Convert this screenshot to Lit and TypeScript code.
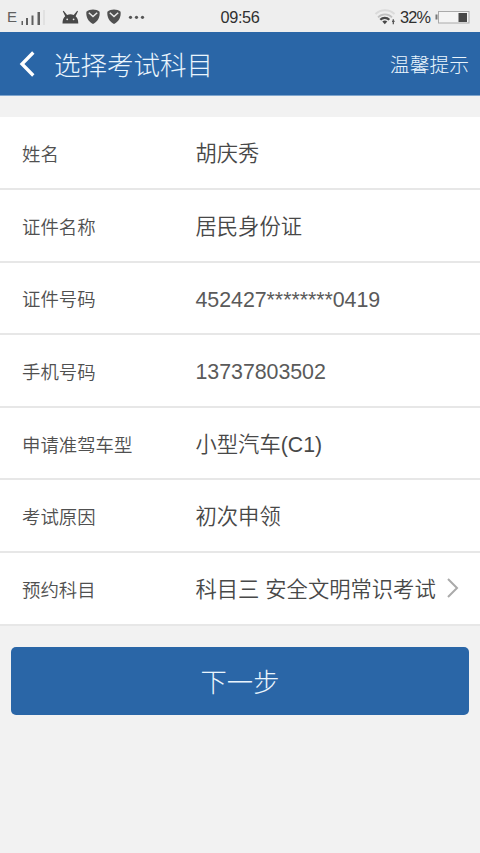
import { LitElement, html, css, svg } from "lit";
import { customElement, property } from "lit/decorators.js";
import { classMap } from "lit/directives/class-map.js";

const shield = (x: number) => svg`
  <g transform="translate(${x} 8.5)">
    <path d="M7 0C9.500 0 12 .8 13.600 2.200 14.200 7.500 11.800 12 7 14.500 2.200 12-.2 7.500.4 2.200 2 .8 4.500 0 7 0z" fill="#505050"/>
    <path d="M2.800 3.200 7 7l4.200-3.800" fill="none" stroke="#e8e8e8" stroke-width="1.500"/>
  </g>`;

@customElement("status-bar")
class StatusBar extends LitElement {
  static styles = css`
    :host {
      display: grid;
      grid-template-columns: 1fr auto 1fr;
      align-items: center;
      height: 32px;
      background: #eeeeee;
      color: #303030;
      font: 16.300px/32px "Liberation Sans", Arial, sans-serif;
    }
    svg { display: block; }
    .time { letter-spacing: -0.300px; }
    .left { display: flex; align-items: center; }
    .network { width: 20px; padding-left: 7px; box-sizing: border-box; font-size: 15px; line-height: 34px; color: #606060; }
    .right { display: flex; justify-content: flex-end; align-items: center; padding-right: 10px; }
    .percent { margin: 0 5px 0 4px; letter-spacing: -0.900px; }
  `;
  render() {
    return html`
      <div class="left">
        <span class="network">E</span>
        <svg width="130" height="32" viewBox="20 0 130 32">
          <g fill="#606060">
            <rect x="21.500" y="20" width="1.500" height="4" />
            <rect x="26" y="17" width="2" height="7" />
            <rect x="31.500" y="14.500" width="2" height="9.500" />
            <rect x="37.500" y="11" width="2.500" height="13" />
            <rect x="43.500" y="9" width="1" height="15" fill="#d4d4d4" />
          </g>
          <path d="M62.500 22.500c0-3.500 1-5.800 2.700-7.200L62.800 10.300l.8-.5 3.500 4.200a9 9 0 0 1 6.600 0l3.500-4.200.8.5-2.400 5c1.700 1.400 2.700 3.700 2.700 7.200z" fill="#484848" />
          <circle cx="67.200" cy="18.300" r=".9" fill="#e8e8e8" />
          <circle cx="73.600" cy="18.300" r=".9" fill="#e8e8e8" />
          ${shield(86)}${shield(107)}
          <g fill="#555"><circle cx="130.500" cy="16.300" r="1.600" /><circle cx="136.500" cy="16.300" r="1.600" /><circle cx="142.500" cy="16.300" r="1.600" /></g>
        </svg>
      </div>
      <span class="time">09:56</span>
      <div class="right">
        <svg width="22" height="32" viewBox="375 0 22 32" fill="none">
          <path d="M376.500 13a14 14 0 0 1 19 0" stroke="#dadada" stroke-width="2" />
          <path d="M379 16.300a10 10 0 0 1 14 0" stroke="#c0c0c0" stroke-width="1.800" />
          <path d="M381.300 18.800a6.300 6.300 0 0 1 9 0" stroke="#484848" stroke-width="2.200" />
          <path d="m383.300 20.500q2.500-2 5 0L385.800 23.300z" fill="#484848" />
          <path d="M394.300 18.300v5M393 20.300h2.600" stroke="#555" stroke-width="1.300" />
        </svg>
        <span class="percent">32%</span>
        <svg width="35" height="32" viewBox="435 0 35 32">
          <rect x="438.500" y="10.500" width="30.500" height="11.500" fill="#f4f4f4" stroke="#aaa" />
          <rect x="435.500" y="13.500" width="2" height="5" fill="#777" />
          <rect x="458.500" y="12" width="8.500" height="9" fill="#484848" />
        </svg>
      </div>`;
  }
}

@customElement("info-row")
class InfoRow extends LitElement {
  @property() label = "";
  @property() value = "";
  @property({ type: Boolean }) link = false;
  static styles = css`
    :host {
      display: flex;
      align-items: center;
      box-sizing: border-box;
      height: 72.640px;
      padding: 0 21px 0 22px;
      border-bottom: 2px solid #e7e7e7;
      background: #fff;
      white-space: nowrap;
      line-height: 32px;
    }
    .label { width: 173.500px; flex: none; padding-top: 5px; font-size: 18.400px; color: #505050; }
    .value { flex: 1; padding-top: 3px; font-size: 21.300px; color: #484848; }
    .value.numeric { padding-top: 4px; color: #5a5a5a; font-size: 21.400px; letter-spacing: -0.050px; }
    svg { display: block; flex: none; }
  `;
  render() {
    return html`
      <span class="label">${this.label}</span>
      <span class=${classMap({ value: true, numeric: /^[\d*]+$/.test(this.value) })}>${this.value}</span>
      ${this.link
        ? html`<svg width="12" height="22" viewBox="0 0 12 22"><path d="m1 2 9 9-9 9" fill="none" stroke="#aaa" stroke-width="2" /></svg>`
        : ""}`;
  }
}

const rows = [
  { label: "姓名", value: "胡庆秀" },
  { label: "证件名称", value: "居民身份证" },
  { label: "证件号码", value: "452427********0419" },
  { label: "手机号码", value: "13737803502" },
  { label: "申请准驾车型", value: "小型汽车(C1)" },
  { label: "考试原因", value: "初次申领" },
  { label: "预约科目", value: "科目三 安全文明常识考试", link: true },
];

@customElement("app-root")
class AppRoot extends LitElement {
  static styles = css`
    :host {
      display: block;
      height: 100vh;
      overflow: hidden;
      background: #f2f2f2;
      font-family: "Liberation Sans", "Noto Sans CJK SC", sans-serif;
      font-weight: 350;
    }
    header {
      display: flex;
      align-items: center;
      box-sizing: border-box;
      height: 64px;
      padding: 0 11px 0 19px;
      background: #2a66a7;
      border-bottom: 1px solid #7fa5cd;
      color: #eaf5fd;
      font-weight: 300;
    }
    header svg { display: block; margin-right: 18px; }
    .title { flex: 1; font-size: 26.500px; }
    .tips { font-size: 19.800px; }
    .list { margin-top: 21.300px; }
    .next {
      display: block;
      width: 458px;
      height: 68px;
      margin: 21px 0 0 11px;
      padding: 0;
      border: 0;
      border-radius: 5px;
      background: #2a66a7;
      color: #eaf5fd;
      font: inherit;
      font-size: 26.300px;
      font-weight: 300;
    }
  `;
  render() {
    return html`
      <status-bar></status-bar>
      <header>
        <svg width="17" height="26" viewBox="0 0 17 26"><path d="M14.300 1.500 3 13l11.300 11.500" fill="none" stroke="#fff" stroke-width="3.300" /></svg>
        <span class="title">选择考试科目</span>
        <span class="tips">温馨提示</span>
      </header>
      <div class="list">
        ${rows.map((r) => html`<info-row .label=${r.label} .value=${r.value} .link=${!!r.link}></info-row>`)}
      </div>
      <button class="next">下一步</button>`;
  }
}
